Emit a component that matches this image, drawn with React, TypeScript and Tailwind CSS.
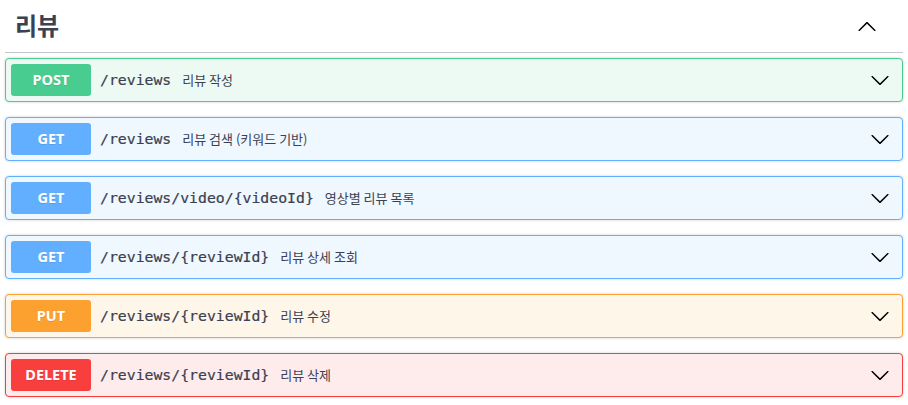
import React from 'react';

type Method = 'POST' | 'GET' | 'PUT' | 'DELETE';

interface Operation {
  method: Method;
  path: string;
  summary: string;
}

const operations: Operation[] = [
  { method: 'POST', path: '/reviews', summary: '리뷰 작성' },
  { method: 'GET', path: '/reviews', summary: '리뷰 검색 (키워드 기반)' },
  { method: 'GET', path: '/reviews/video/{videoId}', summary: '영상별 리뷰 목록' },
  { method: 'GET', path: '/reviews/{reviewId}', summary: '리뷰 상세 조회' },
  { method: 'PUT', path: '/reviews/{reviewId}', summary: '리뷰 수정' },
  { method: 'DELETE', path: '/reviews/{reviewId}', summary: '리뷰 삭제' },
];

// swagger-ish palette: solid badge, 10% tint for the block
const styles: Record<Method, { block: string; badge: string }> = {
  POST: { block: 'border-[#49cc90] bg-[#edfaf4]', badge: 'bg-[#49cc90]' },
  GET: { block: 'border-[#61affe] bg-[#eff7ff]', badge: 'bg-[#61affe]' },
  PUT: { block: 'border-[#fca130] bg-[#fff6ea]', badge: 'bg-[#fca130]' },
  DELETE: { block: 'border-[#f93e3e] bg-[#feecec]', badge: 'bg-[#f93e3e]' },
};

const ChevronDown = () => (
  <svg width="20" height="20" viewBox="0 0 20 20" className="shrink-0">
    <path
      fill="#000"
      d="M17.418 6.109c.272-.268.709-.268.979 0s.271.701 0 .969l-7.908 7.83c-.27.268-.707.268-.979 0l-7.908-7.83c-.27-.268-.27-.701 0-.969.271-.268.709-.268.979 0L10 13.25l7.418-7.141z"
    />
  </svg>
);

const ChevronUp = () => (
  <svg width="20" height="20" viewBox="0 0 20 20" className="shrink-0">
    <path
      fill="#000"
      d="M17.418 14.908c.272.268.709.268.979 0s.271-.701 0-.969l-7.908-7.83c-.27-.268-.707-.268-.979 0l-7.908 7.83c-.27.268-.27.701 0 .969.271.268.709.268.979 0L10 7.767l7.418 7.141z"
    />
  </svg>
);

const OperationRow = ({ op }: { op: Operation }) => {
  const s = styles[op.method];
  return (
    <div
      className={`mb-[15px] flex h-[44px] items-center rounded-[4px] border p-[5px] shadow-[0_0_3px_rgba(0,0,0,0.19)] ${s.block}`}
    >
      <span
        className={`flex h-[32px] w-[80px] shrink-0 items-center justify-center rounded-[3px] text-[14.5px] font-bold text-white [text-shadow:0_1px_0_rgba(0,0,0,0.1)] ${s.badge}`}
        style={{ fontFamily: '"Noto Sans", sans-serif' }}
      >
        {op.method}
      </span>
      <span
        className="pl-[9px] text-[14.8px] font-normal text-[#3b4151] [-webkit-text-stroke:0.2px_#3b4151]"
        style={{ fontFamily: '"DejaVu Sans Mono", monospace' }}
      >
        {op.path}
      </span>
      <span
        className="flex-1 pl-[11px] text-[13px] text-[#3b4151]"
        style={{ fontFamily: '"Noto Sans CJK KR", sans-serif' }}
      >
        {op.summary}
      </span>
      <span className="mr-[7px]">
        <ChevronDown />
      </span>
    </div>
  );
};

export default function App() {
  return (
    <div className="min-h-screen bg-white px-[5px]">
      <div className="flex h-[53px] items-center border-b border-[#c4c6cb] pl-[10px] pr-[26px]">
        <h3
          className="flex-1 pb-[2px] text-[24px] font-bold text-[#3b4151]"
          style={{ fontFamily: '"Noto Sans CJK KR", sans-serif' }}
        >
          리뷰
        </h3>
        <ChevronUp />
      </div>
      <div className="mt-[5px]">
        {operations.map((op, i) => (
          <OperationRow key={i} op={op} />
        ))}
      </div>
    </div>
  );
}
